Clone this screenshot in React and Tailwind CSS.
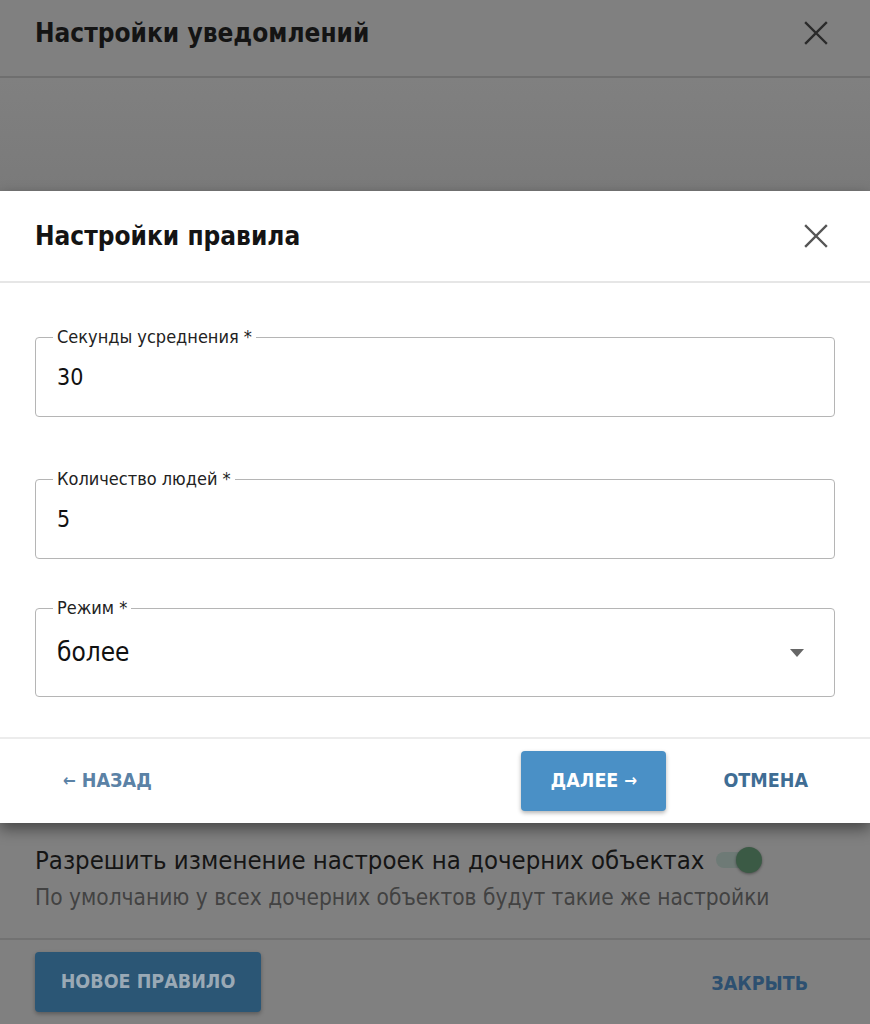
import React from 'react';

const font = { fontFamily: '"DejaVu Sans Condensed", "DejaVu Sans", sans-serif' };

function OutlinedField({ label, value, select, tall }) {
  return (
    <div
      className={`relative rounded border border-[#b5b5b5] pl-[21px] pr-[30px] flex items-center justify-between ${tall ? 'h-[89px]' : 'h-[80px]'}`}
    >
      <span className="absolute -top-[11px] left-[17px] px-[4px] bg-white text-[18px] leading-[20px] text-[#222]">
        {label}
      </span>
      <span className={`${select ? 'text-[26px]' : 'text-[23px]'} text-[#111]`}>{value}</span>
      {select && (
        <svg width="14" height="8" viewBox="0 0 14 8">
          <path d="M0 0 L14 0 L7 8 Z" fill="#666" />
        </svg>
      )}
    </div>
  );
}

function CloseIcon({ color }) {
  return (
    <svg width="24" height="24" viewBox="0 0 24 24" fill="none" stroke={color} strokeWidth="2.4" strokeLinecap="square">
      <path d="M2 2 L22 22 M22 2 L2 22" />
    </svg>
  );
}

export default function App() {
  return (
    <div className="w-[870px] h-[1024px] bg-[#808080] flex flex-col overflow-hidden" style={font}>
      {/* диалог на фоне */}
      <div className="h-[78px] flex items-center justify-between pl-[35px] pr-[42px] pb-[10px] border-b-2 border-[#6f6f6f]">
        <h1 className="text-[26px] font-bold text-[#141414]">Настройки уведомлений</h1>
        <CloseIcon color="#2a2a2a" />
      </div>
      <div className="h-[113px] bg-gradient-to-b from-[#808080] to-[#7a7a7a]" />

      {/* модальное окно */}
      <div className="bg-white h-[632px] flex flex-col shadow-[0_6px_14px_rgba(0,0,0,0.45)] relative z-10">
        <div className="h-[92px] flex items-center justify-between pl-[35px] pr-[42px] border-b-2 border-[#e6e6e6]">
          <h2 className="text-[26px] font-bold text-[#141414]">Настройки правила</h2>
          <CloseIcon color="#555" />
        </div>
        <div className="flex-1 px-[35px] pt-[54px] flex flex-col">
          <OutlinedField label="Секунды усреднения *" value="30" />
          <div className="h-[62px]" />
          <OutlinedField label="Количество людей *" value="5" />
          <div className="h-[49px]" />
          <OutlinedField label="Режим *" value="более" select tall />
        </div>
        <div className="h-[86px] border-t-2 border-[#ececec] flex items-center pl-[63px] pr-[62px]">
          <button className="flex items-center gap-[6px] text-[19.5px] font-bold text-[#5b82a6] uppercase">
            <span className="text-[17px]">←</span>
            <span>Назад</span>
          </button>
          <div className="flex-1" />
          <button className="w-[145px] h-[60px] rounded bg-[#4a90c6] text-white text-[19.5px] font-bold shadow-[0_2px_4px_rgba(0,0,0,0.3)] flex items-center justify-center gap-[6px]">
            <span>ДАЛЕЕ</span>
            <span className="text-[17px]">→</span>
          </button>
          <button className="ml-[57px] text-[19.5px] font-bold text-[#3f6d94]">ОТМЕНА</button>
        </div>
      </div>

      {/* низ фонового диалога */}
      <div className="flex-1 flex flex-col">
        <div className="h-[117px] pl-[35px] pt-[21px] border-b-2 border-[#727272]">
          <div className="flex items-center gap-[12px]">
            <span className="text-[25.5px] leading-[32px] text-[#151515]">Разрешить изменение настроек на дочерних объектах</span>
            <span className="relative w-[46px] h-[26px] flex items-center">
              <span className="w-[40px] h-[16px] rounded-full bg-[#6e7a76]" />
              <span className="absolute right-0 w-[26px] h-[26px] rounded-full bg-[#3b5a45] shadow-[0_1px_3px_rgba(0,0,0,0.4)]" />
            </span>
          </div>
          <p className="mt-[6px] text-[22.5px] leading-[30px] text-[#424242]">По умолчанию у всех дочерних объектов будут такие же настройки</p>
        </div>
        <div className="flex-1 flex items-start justify-between pl-[35px] pr-[62px] pt-[12px]">
          <button className="w-[226px] h-[60px] rounded bg-[#2b5675] text-[#9aa9b5] text-[19.5px] font-bold shadow-[0_2px_4px_rgba(0,0,0,0.3)]">
            НОВОЕ ПРАВИЛО
          </button>
          <button className="mt-[17px] text-[19.5px] font-bold text-[#2d5070]">ЗАКРЫТЬ</button>
        </div>
      </div>
    </div>
  );
}
